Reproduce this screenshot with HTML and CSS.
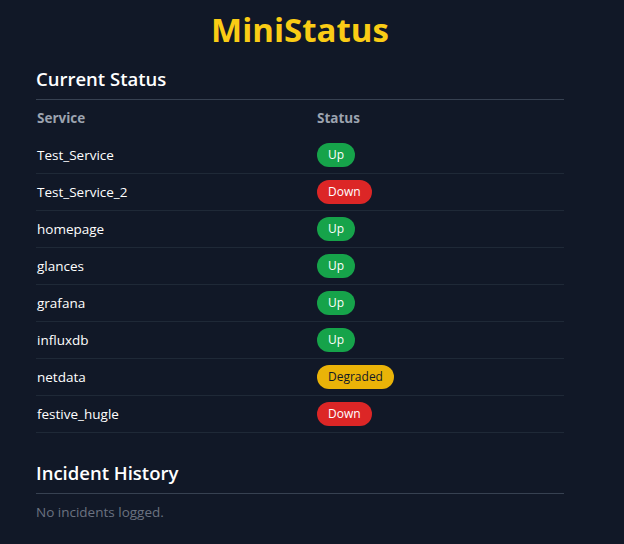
FILE: index.html
```html
<!DOCTYPE html>
<html lang="en">
<head>
<meta charset="utf-8">
<title>MiniStatus</title>
<link rel="stylesheet" href="styles.css">
</head>
<body>
<main class="page">
  <h1 class="brand">MiniStatus</h1>

  <section class="section">
    <h2 class="section-title">Current Status</h2>
    <div class="status-table">
      <div class="row head">
        <div class="cell">Service</div>
        <div class="cell">Status</div>
      </div>
      <div class="row">
        <div class="cell name">Test_Service</div>
        <div class="cell"><span class="badge up">Up</span></div>
      </div>
      <div class="row">
        <div class="cell name">Test_Service_2</div>
        <div class="cell"><span class="badge down">Down</span></div>
      </div>
      <div class="row">
        <div class="cell name">homepage</div>
        <div class="cell"><span class="badge up">Up</span></div>
      </div>
      <div class="row">
        <div class="cell name">glances</div>
        <div class="cell"><span class="badge up">Up</span></div>
      </div>
      <div class="row">
        <div class="cell name">grafana</div>
        <div class="cell"><span class="badge up">Up</span></div>
      </div>
      <div class="row">
        <div class="cell name">influxdb</div>
        <div class="cell"><span class="badge up">Up</span></div>
      </div>
      <div class="row">
        <div class="cell name">netdata</div>
        <div class="cell"><span class="badge degraded">Degraded</span></div>
      </div>
      <div class="row">
        <div class="cell name">festive_hugle</div>
        <div class="cell"><span class="badge down">Down</span></div>
      </div>
    </div>
  </section>

  <section class="section incidents">
    <h2 class="section-title">Incident History</h2>
    <p class="empty">No incidents logged.</p>
  </section>
</main>
</body>
</html>
```

FILE: styles.css
```css
html, body {
  margin: 0;
  padding: 0;
  background: #111827;
}

body {
  font-family: "Open Sans", "Noto Sans", sans-serif;
  color: #f9fafb;
  font-size: 13.5px;
}

.page {
  max-width: 600px;
  box-sizing: border-box;
  padding: 8px 36px 16px;
}

.brand {
  margin: 0;
  text-align: center;
  color: #facc15;
  font-size: 33px;
  font-weight: 700;
  line-height: 44px;
}

.section {
  margin-top: 13px;
}

.section-title {
  margin: 0;
  font-size: 18.5px;
  font-weight: 600;
  line-height: 28px;
  padding-bottom: 6px;
  border-bottom: 1px solid #374151;
  color: #ffffff;
}

.status-table {
  display: flex;
  flex-direction: column;
}

.row {
  display: grid;
  grid-template-columns: 280px 1fr;
  align-items: center;
  height: 36px;
  border-bottom: 1px solid #1f2937;
}

.row.head {
  border-bottom: 1px solid transparent;
  color: #9ca3af;
  font-weight: 700;
}

.cell {
  line-height: 20px;
  padding-left: 1px;
}

.name {
  color: #ffffff;
}

.badge {
  display: inline-block;
  height: 24px;
  line-height: 24px;
  padding: 0 11px;
  border-radius: 12px;
  font-size: 12px;
  color: #ffffff;
}

.badge.up { background: #16a34a; }
.badge.down { background: #dc2626; }
.badge.degraded { background: #eab308; color: #111827; }

.incidents {
  margin-top: 26px;
}

.empty {
  margin: 8px 0 0;
  color: #6b7280;
  line-height: 20px;
}
```
